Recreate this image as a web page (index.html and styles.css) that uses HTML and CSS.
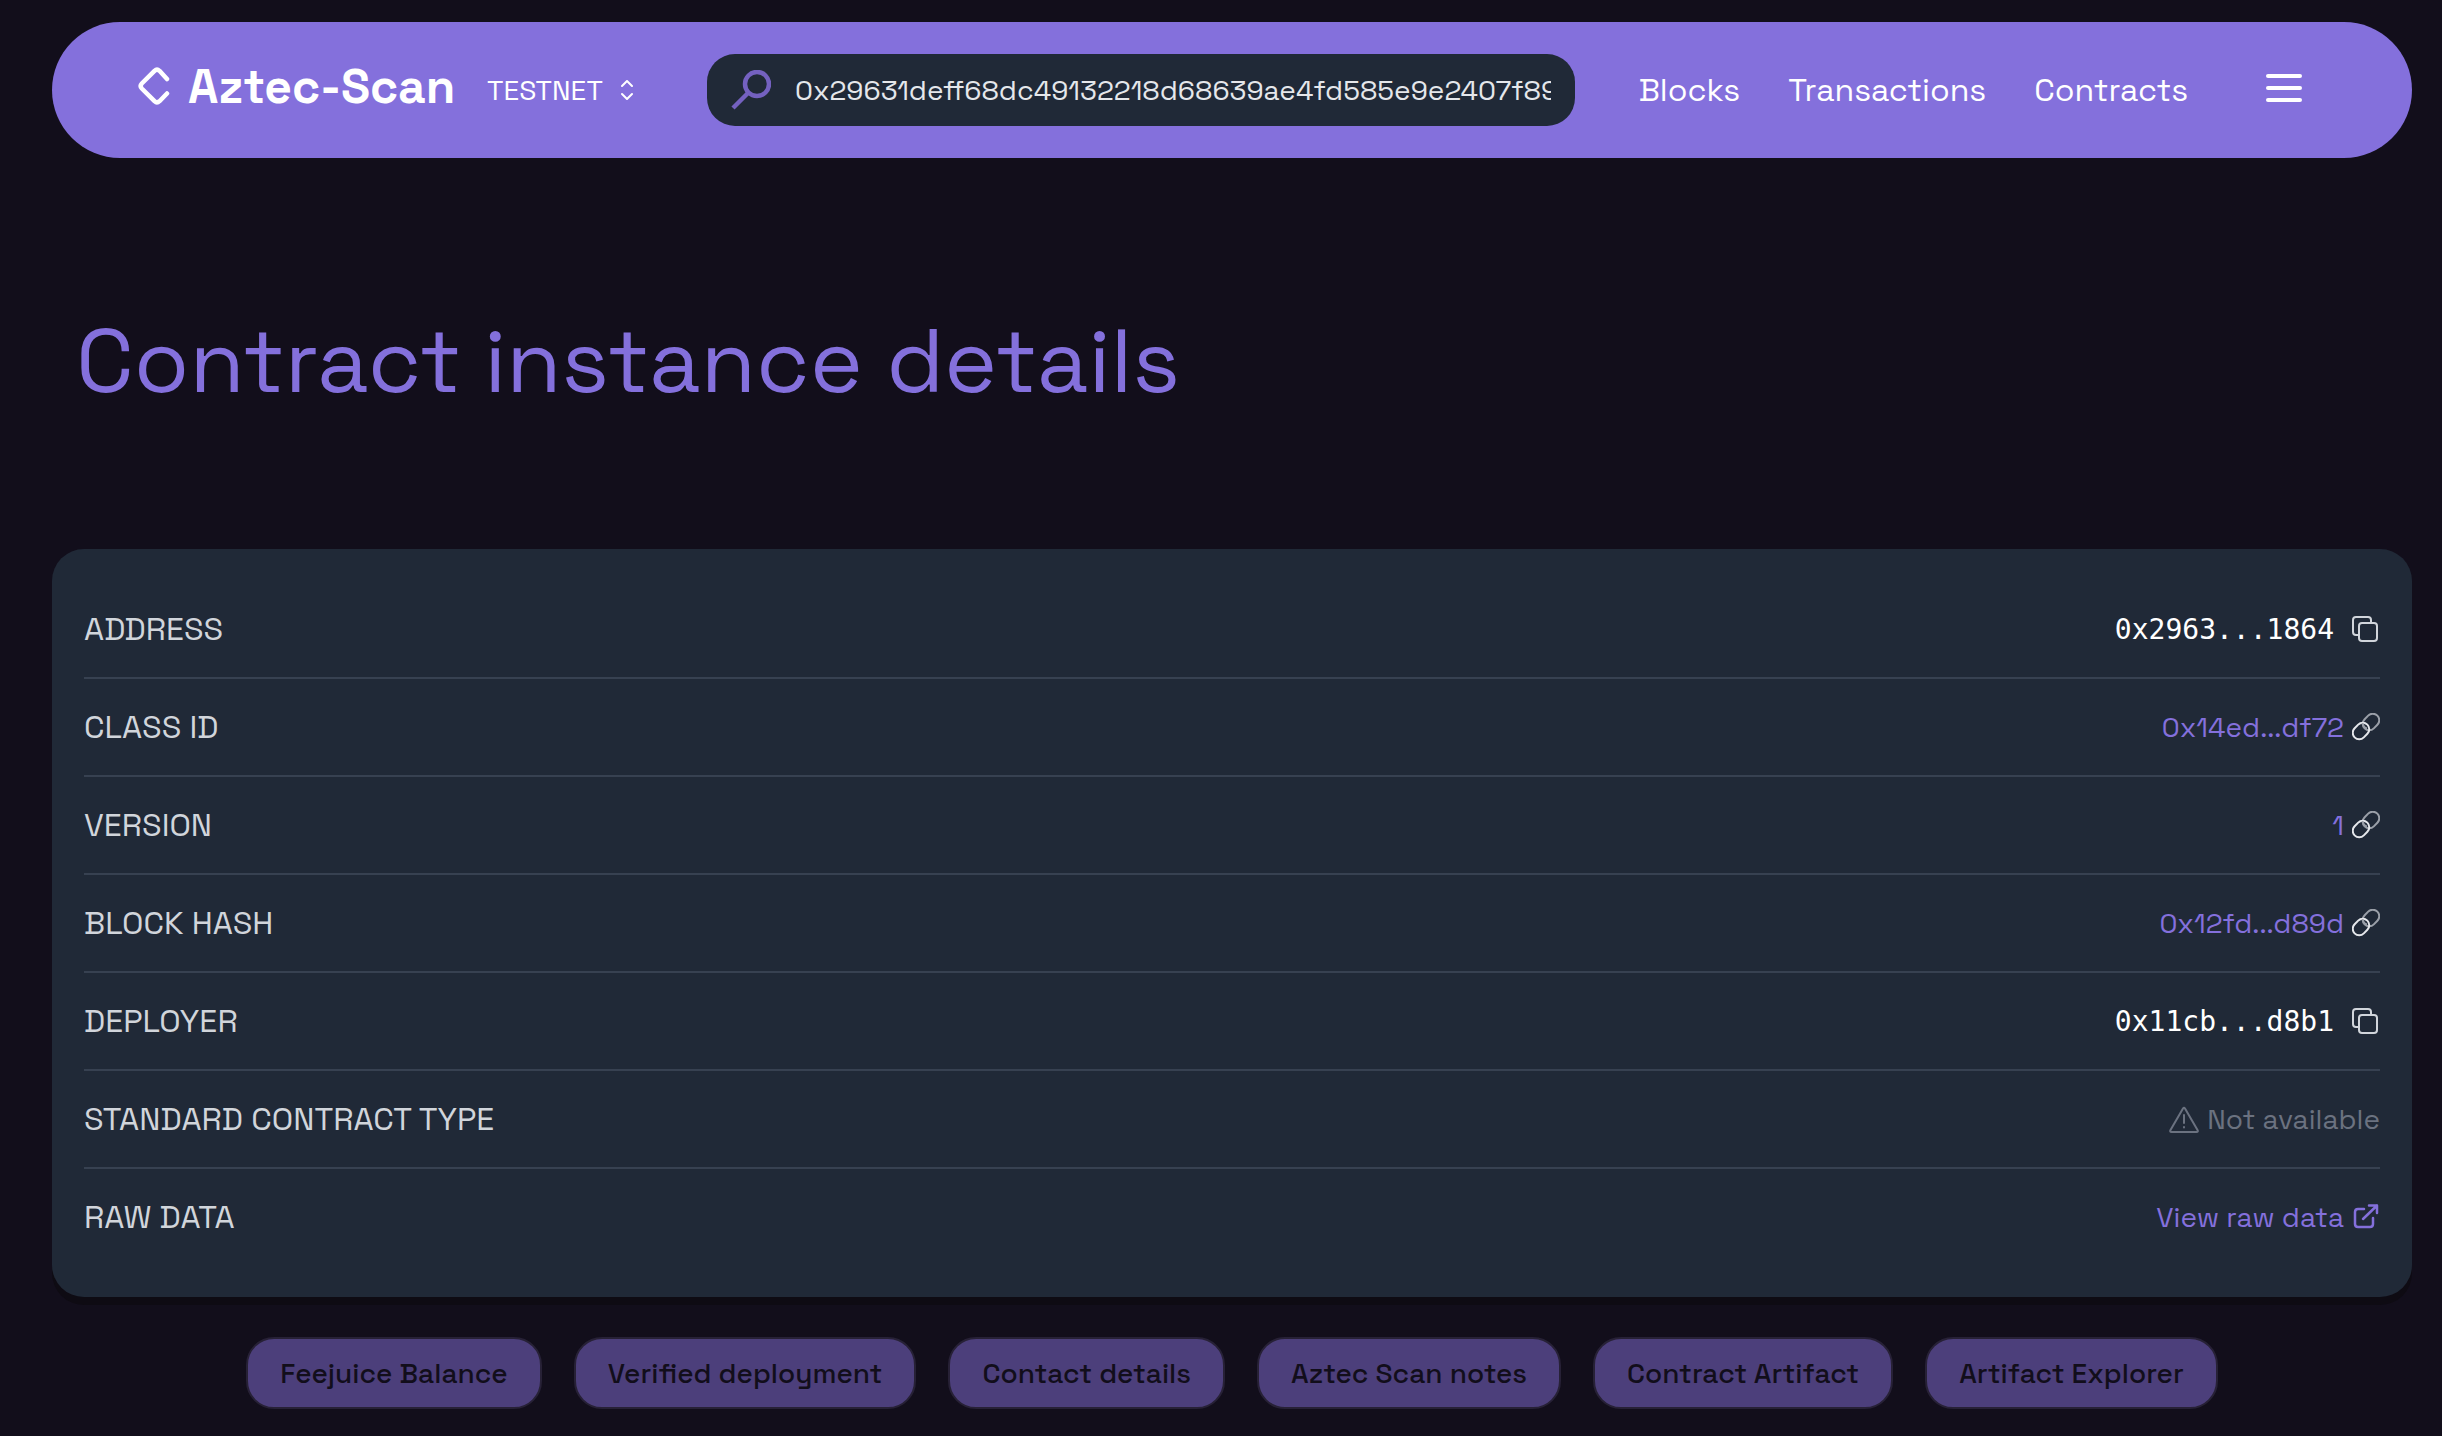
FILE: index.html
```html
<!DOCTYPE html>
<html lang="en">
<head>
    <meta charset="UTF-8">
    <title>Aztec-Scan</title>
    <link rel="stylesheet" href="styles.css">
</head>

<body>

    <!-- Header -->
    <header class="header">
        <a class="logo" href="#">
            <svg class="logo-icon" viewBox="0 0 32 38" fill="none" stroke="currentColor" stroke-width="4.500" stroke-linecap="round" stroke-linejoin="round">
                <path d="M29 12 L21.500 3.800 Q19 1.500 16.500 3.800 L3.800 16.500 Q1.500 19 3.800 21.500 L16.500 34.200 Q19 36.500 21.500 34.200 L29 26.500"/>
            </svg>
            <span>Aztec-Scan</span>
        </a>
        <button class="network" type="button">
            TESTNET
            <svg class="network-icon" viewBox="0 0 12 20" fill="none" stroke="currentColor" stroke-width="2" stroke-linecap="round" stroke-linejoin="round">
                <path d="M1 6 L6 1 L11 6 M1 14 L6 19 L11 14"/>
            </svg>
        </button>
        <form class="search">
            <svg class="search-icon" viewBox="0 0 40 40" fill="none" stroke="currentColor" stroke-width="4.500">
                <circle cx="26" cy="14" r="12"/>
                <path d="M17.500 22.500 L2 38"/>
            </svg>
            <input class="search-input" type="text" aria-label="Search" value="0x29631deff68dc49132218d68639ae4fd585e9e2407f89b1864">
        </form>
        <nav class="nav">
            <a href="#">Blocks</a>
            <a href="#">Transactions</a>
            <a href="#">Contracts</a>
        </nav>
        <button class="menu-btn" type="button" aria-label="Menu">
            <span></span>
            <span></span>
            <span></span>
        </button>
    </header>

    <main>
        <h1 class="title">Contract instance details</h1>

        <!-- Details card -->
        <dl class="card">
            <div class="row">
                <dt>ADDRESS</dt>
                <dd class="hash">0x2963...1864
                    <button class="copy-btn" type="button" aria-label="Copy address"><svg class="icon" viewBox="0 0 28 28"><use href="#copy"/></svg></button>
                </dd>
            </div>
            <div class="row">
                <dt>CLASS ID</dt>
                <dd><a href="#">0x14ed...df72 <svg class="icon" viewBox="0 0 28 28"><use href="#chain"/></svg></a></dd>
            </div>
            <div class="row">
                <dt>VERSION</dt>
                <dd><a href="#">1 <svg class="icon" viewBox="0 0 28 28"><use href="#chain"/></svg></a></dd>
            </div>
            <div class="row">
                <dt>BLOCK HASH</dt>
                <dd><a href="#">0x12fd...d89d <svg class="icon" viewBox="0 0 28 28"><use href="#chain"/></svg></a></dd>
            </div>
            <div class="row">
                <dt>DEPLOYER</dt>
                <dd class="hash">0x11cb...d8b1
                    <button class="copy-btn" type="button" aria-label="Copy deployer"><svg class="icon" viewBox="0 0 28 28"><use href="#copy"/></svg></button>
                </dd>
            </div>
            <div class="row">
                <dt>STANDARD CONTRACT TYPE</dt>
                <dd class="muted">
                    <svg class="warning-icon" viewBox="0 0 30 28" fill="none" stroke="currentColor" stroke-width="2" stroke-linejoin="round" stroke-linecap="round">
                        <path d="M14 3.500 Q15 2 16 3.500 L28.500 25 Q29.500 27 27.500 27 L2.500 27 Q0.500 27 1.500 25 Z M15 10 L15 18 M15 22 L15 22.500"/>
                    </svg>
                    Not available
                </dd>
            </div>
            <div class="row">
                <dt>RAW DATA</dt>
                <dd><a href="#">View raw data
                    <svg class="icon" viewBox="0 0 28 28" fill="none" stroke="currentColor" stroke-width="2.500" stroke-linecap="round" stroke-linejoin="round">
                        <path d="M12 6 L6 6 Q3 6 3 9 L3 21 Q3 24 6 24 L18 24 Q21 24 21 21 L21 15 M11 16 L25 2.500 M17 2.500 L25 2.500 L25 10"/>
                    </svg></a>
                </dd>
            </div>
        </dl>

        <!-- Tabs -->
        <div class="tabs">
            <button type="button">Feejuice Balance</button>
            <button type="button">Verified deployment</button>
            <button type="button">Contact details</button>
            <button type="button">Aztec Scan notes</button>
            <button type="button">Contract Artifact</button>
            <button type="button">Artifact Explorer</button>
        </div>
    </main>

    <!-- Shared icons -->
    <svg width="0" height="0" class="sprite">
        <symbol id="copy" viewBox="0 0 28 28">
            <g fill="none" stroke="#d1d5db" stroke-width="2" stroke-linejoin="round">
                <rect x="7" y="8" width="18" height="18" rx="3"/>
                <path d="M7 20 L4 20 Q1 20 1 17 L1 5 Q1 2 4 2 L16 2 Q19 2 19 5 L19 8"/>
            </g>
        </symbol>
        <symbol id="chain" viewBox="0 0 28 28">
            <g fill="none" stroke-width="2">
                <rect x="10" y="2.500" width="18" height="13" rx="6.500" transform="rotate(-45 19 9)" stroke="#9a9fa8"/>
                <rect x="0" y="11.500" width="18" height="13" rx="6.500" transform="rotate(-45 9 18)" stroke="#e5e7eb"/>
                <path d="M10.500 10 Q11 14 15 15.500" stroke="#9a9fa8"/>
            </g>
        </symbol>
    </svg>

</body>
</html>
```
FILE: styles.css
```css
* {
    margin: 0;
    padding: 0;
    box-sizing: border-box;
}

body {
    padding: 22px 30px 24px 52px;
    background: #120e1b;
    color: #fff;
    font-family: "Space Grotesk", Inter, sans-serif;
    font-size: 28px;
}

a {
    color: inherit;
    text-decoration: none;
}

button {
    border: 0;
    background: none;
    color: inherit;
    font: inherit;
    cursor: pointer;
}

/* Header */

.header {
    display: flex;
    align-items: center;
    height: 136px;
    padding: 0 110px 0 86px;
    border-radius: 68px;
    background: #8470dc;
}

.logo {
    display: flex;
    align-items: center;
    gap: 18px;
    width: 349px;
    padding-bottom: 8px;
    font-size: 48px;
    font-weight: 700;
}

.logo-icon {
    width: 32px;
    height: 38px;
}

.network {
    display: flex;
    align-items: center;
    justify-content: space-between;
    width: 146px;
}

.network-icon {
    width: 12px;
    height: 20px;
}

.search {
    display: flex;
    flex: 1;
    align-items: center;
    gap: 24px;
    height: 72px;
    margin: 0 64px 0 74px;
    padding: 0 24px;
    border-radius: 28px;
    background: #202937;
}

.search-icon {
    flex: none;
    width: 40px;
    height: 40px;
    color: #7461c0;
}

.search-input {
    flex: 1;
    min-width: 0;
    border: 0;
    outline: 0;
    background: none;
    color: #e5e7eb;
    font: inherit;
}

.nav {
    display: flex;
    gap: 48px;
    font-size: 32px;
}

.menu-btn {
    display: flex;
    flex-direction: column;
    gap: 8px;
    width: 36px;
    margin-left: 78px;
    padding-bottom: 4px;
}

.menu-btn span {
    height: 4px;
    border-radius: 2px;
    background: #fff;
}

/* Title */

.title {
    padding: 147px 24px 132px;
    color: #8470dc;
    font-size: 90px;
    font-weight: 400;
    line-height: 112px;
}

/* Card */

.card {
    padding: 32px;
    border-radius: 32px;
    background: #202937;
    box-shadow: 0 8px 0 #0e0b13;
}

.row {
    display: flex;
    align-items: center;
    justify-content: space-between;
    height: 98px;
    border-bottom: 2px solid #374151;
}

.row:last-child {
    height: 96px;
    border-bottom: 0;
}

.row dt {
    color: #d1d5db;
    font-size: 32px;
}

.row dd,
.row dd a {
    display: flex;
    align-items: center;
    gap: 8px;
    color: #8470dc;
}

.row .hash {
    gap: 18px;
    color: #fff;
    font-family: "DejaVu Sans Mono", monospace;
}

.row .muted {
    color: #6b7280;
}

.icon,
.copy-btn {
    display: block;
    width: 28px;
    height: 28px;
}

.warning-icon {
    width: 30px;
    height: 28px;
}

/* Tabs */

.tabs {
    display: flex;
    justify-content: center;
    gap: 32px;
    margin-top: 40px;
}

.tabs button {
    height: 72px;
    padding: 0 32px;
    border: 2px solid #272136;
    border-radius: 28px;
    background: #4c3f7b;
    color: #120e1b;
    font-weight: 500;
}

.sprite {
    position: absolute;
}
```
